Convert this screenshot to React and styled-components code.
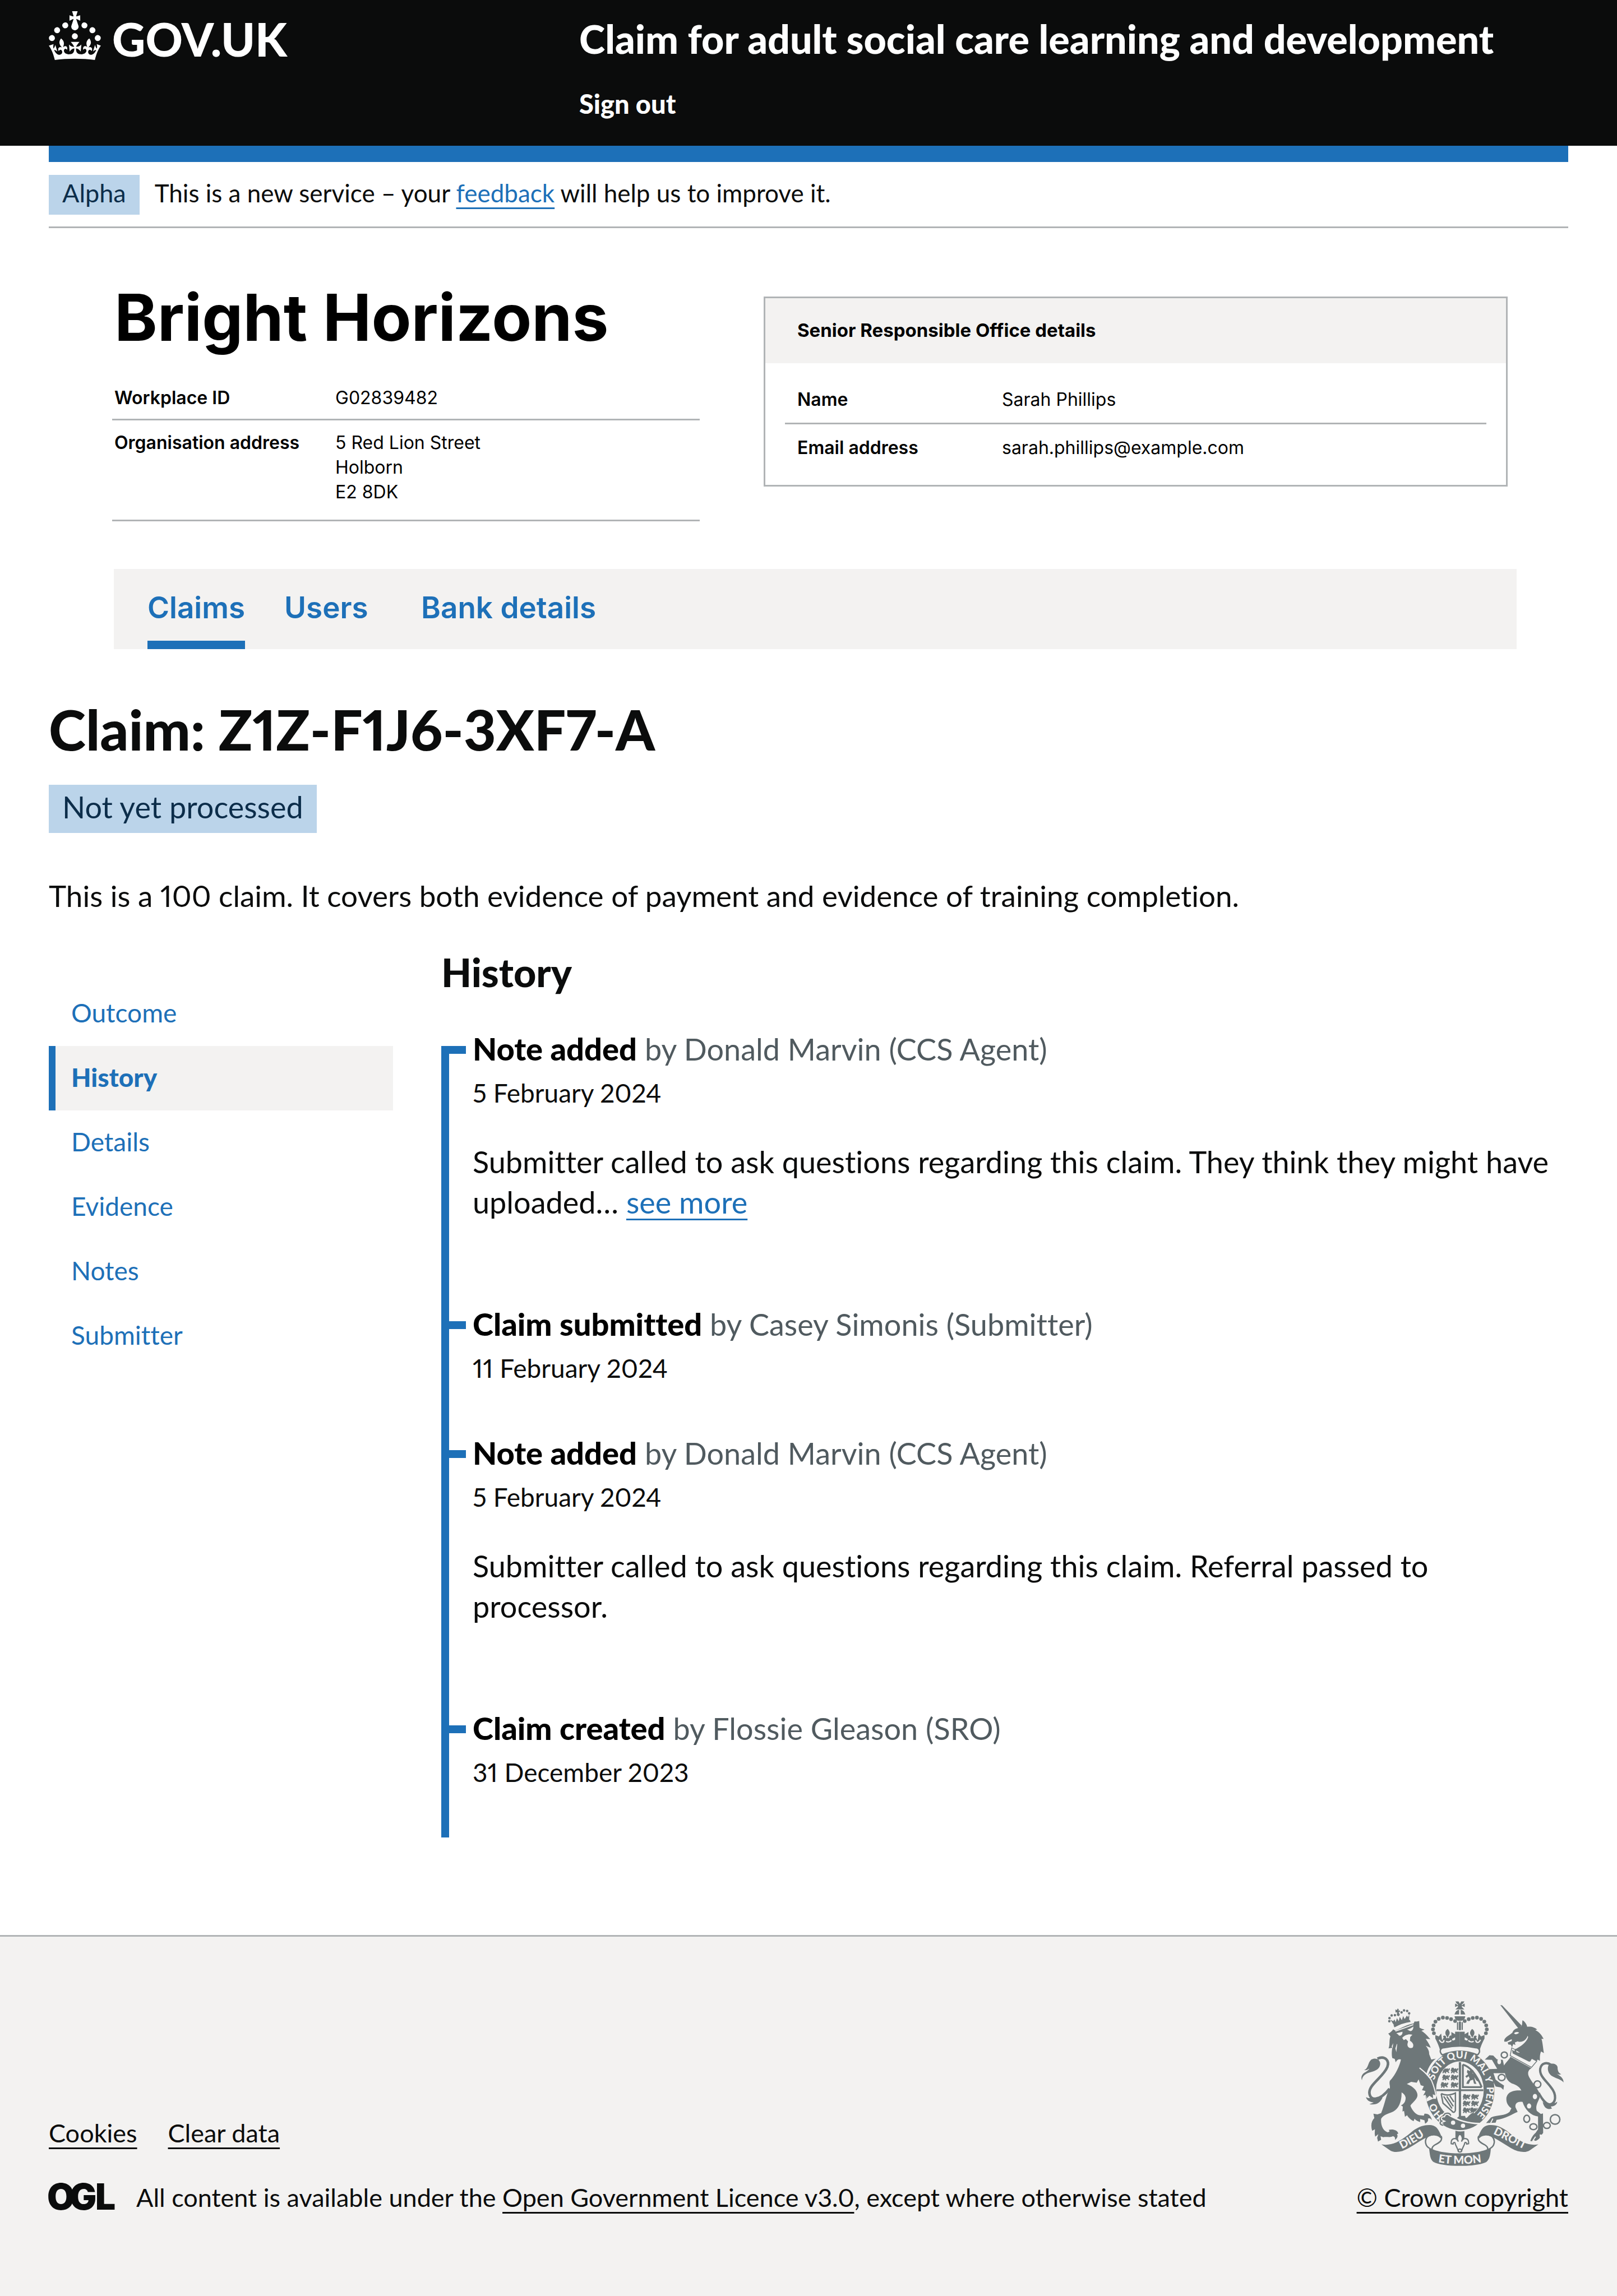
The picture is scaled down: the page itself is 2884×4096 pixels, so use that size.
import React from 'react';
import styled, { createGlobalStyle } from 'styled-components';

const c = {
  black: '#0b0c0c',
  blue: '#1d70b8',
  tint: '#bbd4ea',
  tintText: '#0c2d4a',
  grey: '#f3f2f1',
  border: '#b1b4b6',
  secondary: '#505a5f',
  crest: '#6e7779',
};

const Global = createGlobalStyle`
  *, *::before, *::after { box-sizing: border-box; }
  body {
    margin: 0;
    background: #fff;
    color: ${c.black};
    font-family: Lato, "Open Sans", sans-serif;
    font-size: 53px;
    line-height: 72px;
    font-variant-ligatures: none;
    font-variant-numeric: proportional-nums;
  }
  h1, h2, p, dl, dd, ol, ul { margin: 0; padding: 0; }
  ol, ul { list-style: none; }
`;

const Container = styled.div`
  padding: 0 87px;
`;

/* ---------- header ---------- */

const Header = styled.header`
  background: ${c.black};
  color: #fff;
  padding: 0 87px;
  display: grid;
  grid-template-columns: 946px 1fr;
`;

const LogoLink = styled.a`
  display: flex;
  align-items: flex-start;
  gap: 20px;
  padding-top: 20px;
  color: #fff;
  text-decoration: none;
  font-size: 82px;
  font-weight: 900;
  line-height: 99px;
`;

const HeaderBody = styled.div`
  padding: 29px 0 45px;
  display: flex;
  flex-direction: column;
  align-items: flex-start;
  gap: 46px;
`;

const ServiceLink = styled.a`
  color: #fff;
  text-decoration: none;
  font-weight: 900;
  font-size: 70px;
  line-height: 80px;
`;

const SignOut = styled.a`
  color: #fff;
  text-decoration: none;
  font-weight: 900;
  font-size: 47px;
  line-height: 60px;
`;

const BlueBar = styled.div`
  height: 29px;
  background: ${c.blue};
`;

const Phase = styled.div`
  display: flex;
  align-items: flex-start;
  gap: 27px;
  padding: 23px 0 21px;
  border-bottom: 3px solid ${c.border};
  font-size: 44px;
  line-height: 60px;
`;

const PhaseText = styled.p`
  padding: 2px 0 9px;
`;

const Tag = styled.strong`
  display: inline-block;
  background: ${c.tint};
  color: ${c.tintText};
  font-weight: 400;
  font-size: ${(p) => (p.$large ? 54 : 45)}px;
  line-height: ${(p) => (p.$large ? 72 : 60)}px;
  padding: ${(p) => (p.$large ? '4px 24px 10px' : '2px 24px 9px')};
`;

const Link = styled.a`
  color: ${(p) => (p.$dark ? c.black : c.blue)};
  text-decoration: underline;
  text-decoration-thickness: 3px;
  text-underline-offset: 9px;
  text-decoration-skip-ink: none;
`;

/* ---------- organisation ---------- */

const Organisation = styled.section`
  padding: 89px 92px 0 113px;
  font-family: Inter, sans-serif;
  font-size: 32px;
  line-height: 44px;
  color: #000;
`;

const OrgColumns = styled.div`
  display: grid;
  grid-template-columns: 1048fr 1327fr;
  gap: 114px;
  align-items: start;
  padding-right: 16px;
`;

const OrgName = styled.h1`
  padding-left: 4px;
  margin-bottom: 34px;
  font-size: 116px;
  line-height: 140px;
  font-weight: 700;
`;

const SummaryRow = styled.div`
  display: grid;
  grid-template-columns: ${(p) => p.$label}px 1fr;
  padding: ${(p) => p.$pad};
  border-bottom: ${(p) => (p.$last ? '0' : `3px solid ${c.border}`)};
  dt { font-weight: 600; }
`;

const Card = styled.section`
  margin-top: 33px;
  border: 3px solid ${c.border};
`;

const CardTitle = styled.h2`
  background: ${c.grey};
  padding: 35px 57px 37px;
  font-size: 33px;
  line-height: 44px;
  font-weight: 700;
`;

const CardBody = styled.dl`
  padding: 24px 35px;
`;

const Tabs = styled.nav`
  display: flex;
  gap: 70px;
  margin: 85px 0 0 3px;
  padding: 0 60px;
  background: ${c.grey};
`;

const Tab = styled.a`
  min-width: 174px;
  padding: 37px 0 27px;
  border-bottom: 15px solid ${(p) => (p.$active ? c.blue : 'transparent')};
  color: ${c.blue};
  text-decoration: none;
  font-size: 53px;
  line-height: 64px;
  font-weight: 600;
`;

/* ---------- claim ---------- */

const ClaimTitle = styled.h1`
  margin: 82px 0 40px;
  font-size: 100px;
  line-height: 120px;
  font-weight: 900;
`;

const Intro = styled.p`
  margin: 76px 0 60px;
`;

const TagLine = styled.div`
  display: flex;
`;

const Columns = styled.div`
  display: grid;
  grid-template-columns: 614px 1fr;
  gap: 86px;
  align-items: start;
  padding-bottom: 174px;
`;

const SideNav = styled.nav`
  margin-top: 57px;
`;

const SideLink = styled.a`
  display: block;
  border-left: 12px solid ${(p) => (p.$active ? c.blue : 'transparent')};
  background: ${(p) => (p.$active ? c.grey : 'transparent')};
  padding: 26px 28px 29px;
  color: ${c.blue};
  text-decoration: none;
  font-size: 46px;
  line-height: 60px;
  font-weight: ${(p) => (p.$active ? 900 : 400)};
`;

const SectionTitle = styled.h2`
  font-size: 70px;
  line-height: 80px;
  font-weight: 900;
  margin-bottom: 92px;
`;

const Timeline = styled.ol`
  border-left: 14px solid ${c.blue};
`;

const Event = styled.li`
  display: grid;
  grid-template-columns: 30px 1fr;
  column-gap: 12px;
  padding-bottom: 116px;
  font-size: 54px;
  &::before {
    content: "";
    height: 14px;
    background: ${c.blue};
  }
  &:last-child { padding-bottom: 86px; }
`;

const EventBody = styled.div`
  margin-top: -30px;
`;

const EventTitle = styled.p`
  color: ${c.secondary};
  strong { color: #000; font-weight: 900; font-size: 56px; line-height: 1; }
`;

const EventDate = styled.p`
  margin-top: 12px;
  font-size: 46px;
  line-height: 60px;
`;

const EventText = styled.p`
  margin: 57px 0 60px;
  padding-right: 16px;
`;

/* ---------- footer ---------- */

const Footer = styled.footer`
  display: flex;
  justify-content: space-between;
  align-items: flex-end;
  background: ${c.grey};
  border-top: 3px solid ${c.border};
  padding: 114px 87px 148px;
  font-size: 45px;
  line-height: 60px;
`;

const FooterLinks = styled.ul`
  display: flex;
  gap: 55px;
  margin-bottom: 55px;
`;

const Licence = styled.div`
  display: flex;
  align-items: center;
  gap: 34px;
  svg { margin: -12px 0 -12px -4px; }
`;

const Copyright = styled.div`
  display: flex;
  flex-direction: column;
  align-items: center;
  gap: 25px;
`;

/* ---------- drawings ---------- */

const Crown = () => (
  <svg width="93" height="87" viewBox="0 0 32 30" fill="#fff" aria-hidden="true">
    <path d="M22.6 10.4c-1 .4-2-.1-2.4-1-.4-.9.1-2 1-2.4.9-.4 2 .1 2.4 1s-.1 2-1 2.4m-5.9 6.7c-.9.4-2-.1-2.4-1-.4-.9.1-2 1-2.4.9-.4 2 .1 2.4 1s-.1 2-1 2.4m10.8-3.7c-1 .4-2-.1-2.4-1-.4-.9.1-2 1-2.4.9-.4 2 .1 2.4 1s0 2-1 2.4m3.3 4.8c-1 .4-2-.1-2.4-1-.4-.9.1-2 1-2.4.9-.4 2 .1 2.4 1s-.1 2-1 2.4M17 4.7l2.3 1.2V2.5l-2.3.7-.2-.2.9-3h-3.4l.9 3-.2.2c-.1.1-2.3-.7-2.3-.7v3.4L15 4.7c.1.1.1.2.2.2l-1.3 4c-.1.2-.1.4-.1.6 0 1.1.8 2 1.9 2.2h.7c1-.2 1.9-1.1 1.9-2.1 0-.2 0-.4-.1-.6l-1.3-4c-.1-.2 0-.2.1-.3m-7.6 5.7c.9.4 2-.1 2.4-1 .4-.9-.1-2-1-2.4-.9-.4-2 .1-2.4 1s0 2 1 2.4m-5 3c.9.4 2-.1 2.4-1 .4-.9-.1-2-1-2.4-.9-.4-2 .1-2.4 1s.1 2 1 2.4m-3.2 4.8c.9.4 2-.1 2.4-1 .4-.9-.1-2-1-2.4-.9-.4-2 .1-2.4 1s0 2 1 2.4m14.8 11c4.4 0 8.6.3 12.3.8 1.1-4.5 2.4-7 3.7-8.8l-2.5-.9c.2 1.3.3 1.9 0 2.7-.4-.4-.8-1.1-1.1-2.3l-1.2 4c.7-.5 1.3-.8 2-.9-1.1 2.5-2.6 3.1-3.5 3-1.1-.2-1.7-1.2-1.5-2.1.3-1.2 1.5-1.5 2.1-.1 1.1-2.3-.8-3-2-2.3 1.9-1.9 2.1-3.5.6-5.6-2.1 1.6-2.1 3.2-1.2 5.5-1.2-1.4-3.2-.6-2.5 1.6.9-1.4 2.1-.5 1.9.8-.2 1.1-1.7 2.1-3.5 1.9-2.7-.2-2.9-2.1-2.9-3.6.7-.1 1.9.5 2.9 1.9l.4-4.3c-1.1 1.1-2.1 1.4-3.2 1.4.4-1.2 2.1-3 2.1-3h-5.4s1.7 1.9 2.1 3c-1.1 0-2.1-.2-3.2-1.4l.4 4.3c1-1.4 2.2-2 2.9-1.9-.1 1.5-.2 3.4-2.9 3.6-1.9.2-3.4-.8-3.5-1.9-.2-1.3 1-2.2 1.9-.8.7-2.3-1.2-3-2.5-1.6.9-2.2.9-3.9-1.2-5.5-1.5 2-1.3 3.7.6 5.6-1.2-.7-3.1 0-2 2.3.6-1.4 1.8-1.1 2.1.1.2.9-.3 1.9-1.5 2.1-.9.2-2.4-.5-3.5-3 .6 0 1.2.3 2 .9l-1.2-4c-.3 1.1-.7 1.9-1.1 2.3-.3-.8-.2-1.4 0-2.7l-2.9.9C1.3 23 2.6 25.5 3.7 30c3.7-.5 7.9-.8 12.3-.8" />
  </svg>
);

const OglLogo = () => (
  <svg width="126" height="84" viewBox="0 0 126 84" role="img" aria-label="Open Government Licence">
    <text x="1 41 87" y="64" fontFamily="Inter, sans-serif" fontWeight="900" fontSize="64" fill={c.black}>OGL</text>
  </svg>
);

const beads = [
  [477, 232], [471, 207], [475, 181], [487, 157], [508, 139],
  [535, 131], [562, 133], [588, 141], [614, 153],
];

const motto = [
  ['HO', 14], ['SOIT', 36.5], ['QUI', 48.5], ['MAL', 61], ['Y', 69.5], ['PENSE', 81.5],
];

const smallLions = [
  [535, 455], [590, 455], [535, 500], [590, 500], [525, 548], [590, 548],
  [668, 625], [722, 625], [668, 668], [722, 668], [668, 712], [715, 712],
];

const SmallLion = ({ x, y }) => (
  <path
    transform={`translate(${x} ${y})`}
    d="M2 0h12l4 7 12-4 6 8 2-9 8 3-3 10-8 6 7 9-5 5-9-8-9 2 3 8-9-1-3-9-7 9-7-2 5-10-6-4z"
  />
);

const HalfMount = () => (
  <g>
    {beads.map(([x, y]) => (
      <circle key={x + y} cx={x} cy={y} r="12" />
    ))}
    <path d="M486 244l22 8-6 8 22-26 6 44 10-18-4-10c12-8 24 0 20 14l10-2-8-14c-12-14-8-34 8-44 14 14 18 28 6 44l-6 14 10 2c-4-14 8-24 20-14l-6 12 8 18 16-6v-16l-24 14v-48l24 14v-16h31v128c-50-2-90 4-124 12-6-34-16-60-35-96z" />
    <path d="M512 274c12 26 30 18 30 2M556 284c12 6 26 4 34-6" fill="none" stroke={c.grey} strokeWidth="8" />
  </g>
);

const HalfRibbon = () => (
  <g>
    <path d="M138 950C205 962 262 930 330 872C372 836 420 820 462 826C500 832 512 866 528 904C506 884 470 888 440 900C380 928 330 972 272 994C240 1002 212 1002 190 986Z" />
    <path d="M436 900C412 926 424 962 446 974M524 896C536 928 508 940 486 952C470 962 462 968 466 992M436 900C462 882 504 884 524 908" fill="none" stroke={c.crest} strokeWidth="9" />
  </g>
);

const Crest = () => (
  <svg width="361" height="296" viewBox="8 22 1308 1070" fill={c.crest} role="img" aria-label="Royal coat of arms">
    <defs>
      <path id="garter" pathLength="100" d="M645 806A174 206 0 0 1 645 394A174 206 0 0 1 645 806" />
      <path id="dieu" d="M245 992Q330 955 440 880" />
      <path id="etmon" d="M490 1063Q645 1090 800 1063" />
      <path id="droit" d="M842 874Q960 930 1075 990" />
      <clipPath id="field"><ellipse cx="645" cy="600" rx="152" ry="182" /></clipPath>
    </defs>

    {/* crowned lion */}
    <path d="M222 194l-6-14 106-34 4 12q-56 8-104 36z" />
    <path d="M218 178l-22-34 18 10 8-12 8 18 8-26 12 20 6-28 14 22 8-28 10 20 14-22 8 10 8-18-1 42-92 28z" />
    {[[190, 134], [189, 154], [204, 117], [225, 115], [268, 97], [284, 84], [304, 88], [317, 103]].map(([x, y]) => (
      <circle key={x} cx={x} cy={y} r="8" />
    ))}
    <path d="M228 78l10 4 4-10 8 4-2 9 10 0-1 9-8 2 8 16-8 10-12-6 2-20-10 2z" />
    <path d="M182 234C196 228 206 216 214 206L226 214C270 198 300 176 346 168L352 156C368 158 376 154 382 152L384 196C396 204 406 206 416 208L396 216C420 228 440 256 454 270L424 268C436 286 452 310 456 326L424 312C440 330 448 350 446 366C452 382 456 392 460 402C472 400 480 398 490 396C466 414 440 450 430 490L388 456C430 496 462 540 472 572L488 634L470 624L472 650L448 634L430 654L432 628L408 634L424 606L400 600L412 574L392 568L378 530L366 552L330 546L302 560C346 578 370 604 371 632C370 660 340 676 325 700C336 728 356 756 384 762L412 764L416 752C440 748 460 766 464 794C454 780 446 780 438 784C444 796 434 808 420 816L416 794L388 786L388 806C372 800 360 794 352 784L346 800C330 794 310 776 304 762L290 772L284 734L274 738L276 706L264 698C286 690 296 668 294 646C290 630 280 620 268 614C270 670 250 722 214 738C180 752 150 760 136 784C132 830 150 864 178 872L190 868L186 856C210 850 242 856 247 880L238 884C246 896 242 908 226 922C228 906 222 898 210 898C196 908 170 898 150 904L132 898L136 920L116 932L110 908L118 884L98 900C92 880 96 866 96 852L78 862C68 830 72 800 92 780L86 752L112 756L136 748C160 690 168 630 192 588C196 570 186 560 192 540C230 500 256 440 264 402C246 396 236 408 230 420L224 398L208 392C202 370 206 340 208 326L184 330C194 306 186 280 196 252Z" />
    <path d="M228 218Q280 200 344 176" stroke={c.grey} strokeWidth="7" fill="none" />
    <g fill={c.grey}>
      <path d="M234 232L274 222C276 246 254 256 246 240Z" />
      <path d="M304 208C320 204 332 196 344 188C346 214 326 224 316 214Z" />
      <path d="M272 262C290 240 320 234 338 242L324 256L322 280C340 290 350 308 340 324C324 334 304 324 306 302L310 284L296 270L282 276Z" />
      <path d="M228 330l10-30 2 4-6 50zM204 316l10-20-4 34z" />
    </g>
    <path d="M112 396C160 374 192 408 176 450C150 514 62 560 60 614C62 676 130 668 190 590" fill="none" stroke={c.crest} strokeWidth="17" />
    <path d="M72 402C104 386 132 404 130 432C126 470 92 476 58 486C30 496 14 510 12 536C4 516 10 500 26 488C44 478 56 470 60 460C48 468 38 472 26 470C54 460 48 424 72 402ZM38 645C64 660 96 644 146 646C130 684 104 698 60 690L88 680C56 676 42 662 38 645Z" />

    {/* royal crown */}
    <path d="M616 26h20l9 16 9-16h20l-8 14-8 4v8l8-8 10-4v22l-10-4-8-4v8l16 16h-58l16-16v-8l-8 4-10 4v-22l10 4 8 8v-8l-8-4zM610 110q8-26 30-30v30zM680 110q-8-26-30-30v30zM610 122h70q-4 30-35 30t-35-30zM626 160h8v50h-8zM656 160h8v50h-8z" />
    <path d="M638 156h14v56h-14z" />
    <HalfMount />
    <g transform="translate(1290 0) scale(-1 1)"><HalfMount /></g>

    {/* garter and shield */}
    <ellipse cx="645" cy="600" rx="223" ry="258" />
    <ellipse cx="645" cy="600" rx="154" ry="186" fill={c.grey} />
    <path d="M532 372C510 354 514 326 544 325Q645 304 746 325C776 326 780 354 758 372Q700 348 645 348Q590 348 532 372Z" fill={c.grey} stroke={c.crest} strokeWidth="9" />
    <g clipPath="url(#field)">
      <path d="M638 410h14v184h150v12H652v184h-14V606H488v-12h150z" />
      <path d="M641 410v380M649 410v380" stroke={c.crest} strokeWidth="4" />
      {smallLions.map(([x, y]) => <SmallLion key={`${x}-${y}`} x={x} y={y} />)}
      <path d="M664 434v146h122M664 434q70 20 122 146" fill="none" stroke={c.crest} strokeWidth="12" />
      <path d="M694 468l14 8 8-14 16 10-6 18 20 14 20 40-12-4-16-24 6 24 8 20-16-2-6-26-18 6-10 22-16-2 8-18 14-14-6-16-14 10-8-10 18-14-8-12z" />
      <path d="M524 622l12 62 66 58M524 622q40 20 92-4v112q-6 20-22 8M540 640l54 78M560 640l42 64M580 636l26 40" fill="none" stroke={c.crest} strokeWidth="9" />
    </g>
    <path d="M626 780l16-14h36l8 22-20 16zM682 790q20-30 44-44l60 20-34 50q-40 0-70-26z" />
    <path d="M578 762C640 800 700 814 772 816" fill="none" stroke={c.grey} strokeWidth="10" />
    <circle cx="601" cy="810" r="14" fill={c.grey} />
    <circle cx="665" cy="830" r="14" fill={c.grey} />
    <path d="M586 764c-6-22-40-20-46 0-24 0-30 28-12 36-20 8-10 26 10 26" fill="none" stroke={c.grey} strokeWidth="22" />
    <path d="M586 764c-6-22-40-20-46 0-24 0-30 28-12 36-20 8-10 26 10 26" fill="none" stroke={c.crest} strokeWidth="8" />
    <path d="M384 456Q440 500 462 538Q480 580 490 632" fill="none" stroke={c.grey} strokeWidth="7" />
    <path d="M428 640l40-14 26 4-4 26-20 0-40 18z" fill={c.grey} />
    <path d="M430 654l2-26 30-20 26 26-18-8 2 26-24-16z" />
    <g fill={c.grey} fontFamily="Lato, sans-serif" fontWeight="900" fontSize="64" textAnchor="middle">
      {motto.map(([word, at]) => (
        <text key={word}><textPath href="#garter" startOffset={`${at}%`}>{word}</textPath></text>
      ))}
    </g>

    {/* chained unicorn */}
    <g transform="translate(630 0)">
      <path d="M276 50l12 2 126 130-20 20z" />
      <path d="M390 198L412 186C420 176 416 160 420 148C436 158 446 174 450 190C476 186 500 194 514 208L502 212C528 222 544 246 556 268L542 268C550 290 552 330 558 360L540 350C530 370 532 390 532 410L518 402L494 430L458 404L420 396L398 366L368 360L366 338C410 318 446 290 456 256L452 248C448 270 420 296 388 284L370 292L374 308L360 302L352 322L344 306L328 304L324 292L350 282L350 270L316 286L302 286C296 262 330 248 354 228C360 210 374 202 390 198Z" />
      <path d="M364 232q16-14 34-4q-14 14-28 8z" fill={c.grey} />
      <path d="M350 326L512 412L478 452L340 376Z" fill={c.grey} stroke={c.crest} strokeWidth="5" />
      <path d="M356 362l-4-24 14 10 8-16 8 22 18 4 6-18 10 22 18 6 8-18 8 26 18 8 8-16 8 22-14 24-8 2z" />
      <path d="M342 384L478 458C452 470 452 496 462 514C482 552 512 580 528 616L530 650C516 680 502 706 512 734L538 754L552 750L553 876L544 888L530 886L532 908C516 926 500 934 494 920L484 930L470 928C478 906 488 890 504 876L520 852L520 770C476 766 436 728 420 676C392 670 370 682 374 710L388 740C350 756 310 784 252 792L246 810L184 812L216 776C250 760 310 766 336 740L348 716C322 700 312 672 316 646C326 606 370 600 412 602C400 578 382 566 350 556C322 540 312 520 306 490L232 490L246 532L272 552L300 570L296 598L280 582L246 576L204 490L206 464L256 462L222 404L176 402L206 374L230 376L254 400L292 404L300 440C312 420 334 402 342 384Z" />
      <path d="M214 812l14-28M484 930l20-30" stroke={c.grey} strokeWidth="7" />
      <g fill={c.grey}>
        <ellipse cx="500" cy="641" rx="14" ry="17" />
        <ellipse cx="462" cy="702" rx="14" ry="16" />
        <ellipse cx="269" cy="415" rx="12" ry="17" />
      </g>
      <g fill="none" stroke={c.crest} strokeWidth="9">
        <ellipse cx="302" cy="372" rx="20" ry="19" />
        <ellipse cx="285" cy="518" rx="22" ry="20" />
        <ellipse cx="516" cy="562" rx="22" ry="22" />
        <ellipse cx="447" cy="785" rx="19" ry="23" />
        <ellipse cx="490" cy="836" rx="23" ry="19" />
        <ellipse cx="577" cy="828" rx="22" ry="19" />
        <circle cx="630" cy="789" r="31" />
      </g>
      <path d="M524 618C552 670 572 690 596 692C640 684 640 626 604 582C570 536 528 508 534 462C540 424 576 416 604 436" fill="none" stroke={c.crest} strokeWidth="15" />
      <path d="M590 434C610 424 640 428 646 450C646 476 654 490 670 496C656 502 648 498 640 492C660 510 684 516 685 550C668 530 640 526 616 512C584 496 576 460 590 434ZM550 676C576 696 620 694 644 674C642 694 626 704 602 706L610 718C580 730 558 714 550 676Z" />
    </g>

    {/* motto ribbon */}
    <HalfRibbon />
    <g transform="translate(1290 0) scale(-1 1)"><HalfRibbon /></g>
    <path d="M444 968C520 1022 770 1022 846 968C842 1004 842 1040 818 1062C760 1098 530 1098 472 1062C448 1040 452 1004 444 968Z" />
    <g fill={c.grey} fontFamily="Lato, sans-serif" fontWeight="900" fontSize="72">
      <text textAnchor="middle"><textPath href="#dieu" startOffset="50%">DIEU</textPath></text>
      <text textAnchor="middle"><textPath href="#etmon" startOffset="50%">ET MON</textPath></text>
      <text textAnchor="middle"><textPath href="#droit" startOffset="50%">DROIT</textPath></text>
    </g>
    <path d="M616 862q30 8 58 2v50h-58z" />
    <path d="M645 882c16 14 22 30 10 50 14-32 50-22 46 14l-12 2c-2-14-16-12-14 0l-14 30-6 18h-20l-6-18-14-30c2-12-12-14-14 0l-12-2c-4-36 32-46 46-14-12-20-6-36 10-50z" fill={c.grey} stroke={c.crest} strokeWidth="8" />
    <circle cx="645" cy="990" r="10" fill={c.grey} stroke={c.crest} strokeWidth="7" />
  </svg>
);

/* ---------- content ---------- */

const sections = ['Outcome', 'History', 'Details', 'Evidence', 'Notes', 'Submitter'];

const events = [
  {
    title: 'Note added',
    by: 'by Donald Marvin (CCS Agent)',
    date: '5 February 2024',
    text: 'Submitter called to ask questions regarding this claim. They think they might have uploaded… ',
    more: true,
  },
  { title: 'Claim submitted', by: 'by Casey Simonis (Submitter)', date: '11 February 2024' },
  {
    title: 'Note added',
    by: 'by Donald Marvin (CCS Agent)',
    date: '5 February 2024',
    text: 'Submitter called to ask questions regarding this claim. Referral passed to processor.',
  },
  { title: 'Claim created', by: 'by Flossie Gleason (SRO)', date: '31 December 2023' },
];

export default function App() {
  return (
    <>
      <Global />
      <Header>
        <LogoLink href="#home">
          <Crown />
          GOV.UK
        </LogoLink>
        <HeaderBody>
          <ServiceLink href="#service">Claim for adult social care learning and development</ServiceLink>
          <SignOut href="#sign-out">Sign out</SignOut>
        </HeaderBody>
      </Header>

      <Container>
        <BlueBar />
        <Phase>
          <Tag>Alpha</Tag>
          <PhaseText>
            This is a new service – your <Link href="#feedback">feedback</Link> will help us to improve it.
          </PhaseText>
        </Phase>

        <Organisation>
          <OrgColumns>
            <div>
              <OrgName>Bright Horizons</OrgName>
              <dl>
                <SummaryRow $label={394} $pad="18px 4px 15px">
                  <dt>Workplace ID</dt>
                  <dd>G02839482</dd>
                </SummaryRow>
                <SummaryRow $label={394} $pad="18px 4px 27px">
                  <dt>Organisation address</dt>
                  <dd>
                    5 Red Lion Street
                    <br />
                    Holborn
                    <br />
                    E2 8DK
                  </dd>
                </SummaryRow>
              </dl>
            </div>
            <Card>
              <CardTitle>Senior Responsible Office details</CardTitle>
              <CardBody>
                <SummaryRow $label={365} $pad="19px 22px">
                  <dt>Name</dt>
                  <dd>Sarah Phillips</dd>
                </SummaryRow>
                <SummaryRow $label={365} $pad="20px 22px" $last>
                  <dt>Email address</dt>
                  <dd>sarah.phillips@example.com</dd>
                </SummaryRow>
              </CardBody>
            </Card>
          </OrgColumns>
          <Tabs aria-label="Organisation">
            <Tab href="#claims" $active>Claims</Tab>
            <Tab href="#users">Users</Tab>
            <Tab href="#bank">Bank details</Tab>
          </Tabs>
        </Organisation>

        <main>
          <ClaimTitle>Claim: Z1Z-F1J6-3XF7-A</ClaimTitle>
          <TagLine>
            <Tag $large>Not yet processed</Tag>
          </TagLine>
          <Intro>This is a 100 claim. It covers both evidence of payment and evidence of training completion.</Intro>

          <Columns>
            <SideNav aria-label="Claim sections">
              {sections.map((name) => (
                <SideLink key={name} href={`#${name.toLowerCase()}`} $active={name === 'History'}>
                  {name}
                </SideLink>
              ))}
            </SideNav>
            <section>
              <SectionTitle>History</SectionTitle>
              <Timeline>
                {events.map((event, i) => (
                  <Event key={i}>
                    <EventBody>
                      <EventTitle>
                        <strong>{event.title}</strong> {event.by}
                      </EventTitle>
                      <EventDate>{event.date}</EventDate>
                      {event.text && (
                        <EventText>
                          {event.text}
                          {event.more && <Link href="#note">see more</Link>}
                        </EventText>
                      )}
                    </EventBody>
                  </Event>
                ))}
              </Timeline>
            </section>
          </Columns>
        </main>
      </Container>

      <Footer>
        <div>
          <FooterLinks>
            <li><Link $dark href="#cookies">Cookies</Link></li>
            <li><Link $dark href="#clear">Clear data</Link></li>
          </FooterLinks>
          <Licence>
            <OglLogo />
            <span>
              All content is available under the{' '}
              <Link $dark href="#licence">Open Government Licence v3.0</Link>, except where otherwise stated
            </span>
          </Licence>
        </div>
        <Copyright>
          <Crest />
          <Link $dark href="#copyright">© Crown copyright</Link>
        </Copyright>
      </Footer>
    </>
  );
}
